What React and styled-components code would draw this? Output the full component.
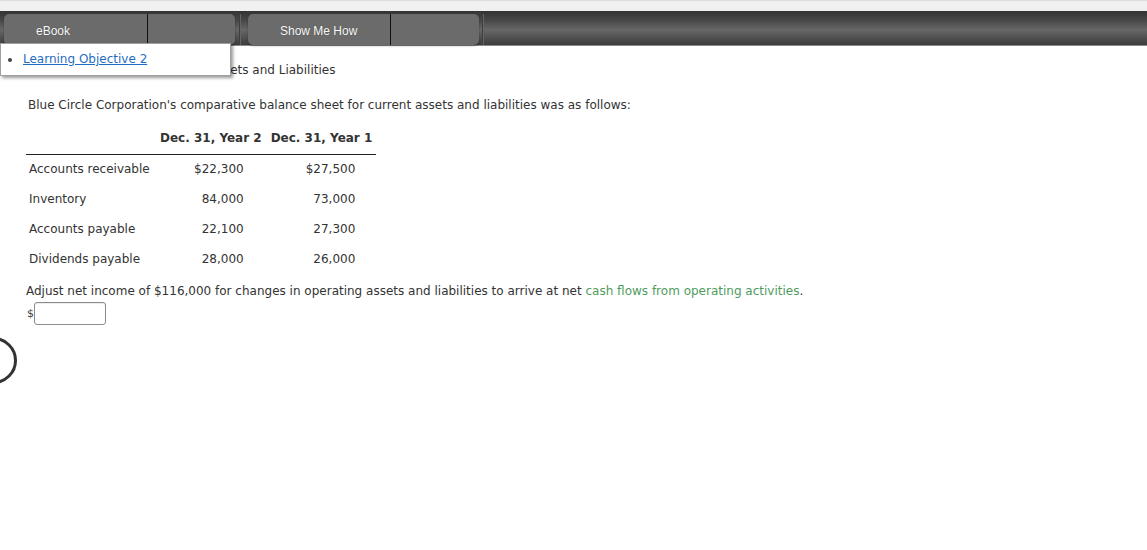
import React from 'react'
import styled, { createGlobalStyle } from 'styled-components'

const Global = createGlobalStyle`
  html, body { margin: 0; padding: 0; background: #fff; }
  body { font-family: "DejaVu Sans", Verdana, sans-serif; font-size: 12px; color: #333; }
`

const Page = styled.div`
  position: relative;
  width: 1147px;
  height: 550px;
  overflow: hidden;
`

const TopStrip = styled.div`
  height: 10px;
  background: #f0f0f0;
  border-top: 1px solid #dcdcdc;
`

const Toolbar = styled.div`
  height: 35px;
  box-sizing: border-box;
  display: flex;
  align-items: flex-start;
  padding: 3px 0 0 4px;
  background: linear-gradient(#333 0%, #4a4a4a 30%, #676767 55%, #4a4a4a 85%, #3d3d3d 100%);
  border-bottom: 1px solid #8a8a8a;
`

const TabButton = styled.div`
  width: 231px;
  height: 31px;
  display: grid;
  grid-template-columns: ${p => p.split}px 1fr;
  background: #6b6b6b;
  border-radius: 5px;
  box-shadow: 0 1px 2px rgba(0,0,0,.35);
  font-family: "Liberation Sans", Arial, sans-serif;
  font-size: 12px;
  color: #fafafa;
  text-shadow: 0 0 1px rgba(0,0,0,.4);
`

const TabLabel = styled.div`
  display: flex;
  align-items: center;
  padding: 2px 0 0 32px;
  border-right: 1px solid #111;
`

const Sep = styled.div`
  width: 2px;
  height: 31px;
  margin: 0 ${p => p.right}px 0 ${p => p.left}px;
  background: linear-gradient(90deg, #2c2c2c, #777);
`

const Popup = styled.div`
  position: absolute;
  left: 0;
  top: 43px;
  width: 229px;
  height: 31px;
  background: #fff;
  border: 1px solid #a0a0a0;
  box-shadow: 2px 2px 3px rgba(0,0,0,.4);
  z-index: 2;
  ul { margin: 0; padding: 0 0 0 22px; list-style: none; }
  li { position: relative; line-height: 31px; }
  li::before {
    content: "";
    position: absolute;
    left: -15px;
    top: 14px;
    width: 4px;
    height: 4px;
    border-radius: 50%;
    background: #444;
  }
  a { color: #1f6dc2; text-decoration: underline; font-size: 12px; }
`

const Content = styled.div`
  padding: 16px 0 0 28px;
`

const Title = styled.div`
  line-height: 16px;
  margin: 0 0 19px -3px;
`

const Para = styled.p`
  margin: 0 0 17px;
  line-height: 16px;
`

const Table = styled.table`
  border-collapse: collapse;
  margin-left: -2px;
  th {
    font-weight: bold;
    text-align: center;
    padding: 0 4px 8px 5px;
    height: 16px;
    line-height: 16px;
    border-bottom: 1px solid #222;
    color: #333;
    white-space: nowrap;
  }
  td {
    height: 30px;
    padding: 0;
    white-space: nowrap;
    line-height: 28px;
    vertical-align: top;
  }
`

const LabelCell = styled.td`
  width: 126px;
  padding-left: 3px !important;
`

const NumCell = styled.td`
  text-align: right;
  padding-right: ${p => p.pad}px !important;
`

const Question = styled.p`
  margin: 8px 0 0 -2px;
  line-height: 16px;
`

const Term = styled.span`
  color: #4f9c5e;
`

const AnswerRow = styled.div`
  display: flex;
  align-items: center;
  margin: 3px 0 0 -1px;
  font-size: 11px;
  color: #444;
`

const Input = styled.div`
  width: 70px;
  height: 21px;
  border: 1px solid #8c8c8c;
  border-radius: 3px;
  box-shadow: inset 0 1px 1px rgba(0,0,0,.08);
`

const Ring = styled.div`
  position: absolute;
  left: -30px;
  top: 337px;
  width: 41px;
  height: 41px;
  border: 3px solid #333;
  border-radius: 50%;
`

const rows = [
  ['Accounts receivable', '$22,300', '$27,500'],
  ['Inventory', '84,000', '73,000'],
  ['Accounts payable', '22,100', '27,300'],
  ['Dividends payable', '28,000', '26,000'],
]

export default function App() {
  return (
    <Page>
      <Global />
      <TopStrip />
      <Toolbar>
        <TabButton split={144}>
          <TabLabel>eBook</TabLabel>
          <div />
        </TabButton>
        <Sep left={4} right={7} />
        <TabButton split={143}>
          <TabLabel>Show Me How</TabLabel>
          <div />
        </TabButton>
        <Sep left={3} right={0} />
      </Toolbar>
      <Popup>
        <ul>
          <li><a href="#">Learning Objective 2</a></li>
        </ul>
      </Popup>
      <Content>
        <Title>Cash Effects of All the Current Assets and Liabilities</Title>
        <Para>Blue Circle Corporation's comparative balance sheet for current assets and liabilities was as follows:</Para>
        <Table>
          <thead>
            <tr>
              <th></th>
              <th>Dec. 31, Year 2</th>
              <th>Dec. 31, Year 1</th>
            </tr>
          </thead>
          <tbody>
            {rows.map(r => (
              <tr key={r[0]}>
                <LabelCell>{r[0]}</LabelCell>
                <NumCell pad={22}>{r[1]}</NumCell>
                <NumCell pad={21}>{r[2]}</NumCell>
              </tr>
            ))}
          </tbody>
        </Table>
        <Question>
          Adjust net income of $116,000 for changes in operating assets and liabilities to arrive at net <Term>cash flows from operating activities</Term>.
        </Question>
        <AnswerRow>
          $<Input />
        </AnswerRow>
      </Content>
      <Ring />
    </Page>
  )
}
